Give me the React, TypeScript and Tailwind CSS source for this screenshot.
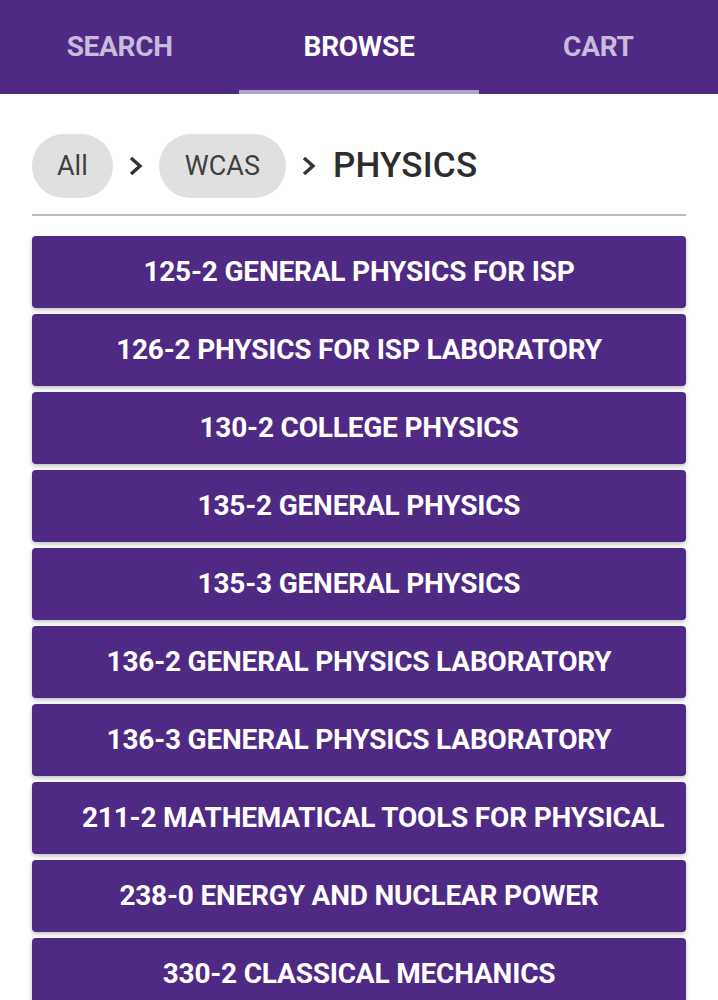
import React from "react"

const courses = [
  "125-2 GENERAL PHYSICS FOR ISP",
  "126-2 PHYSICS FOR ISP LABORATORY",
  "130-2 COLLEGE PHYSICS",
  "135-2 GENERAL PHYSICS",
  "135-3 GENERAL PHYSICS",
  "136-2 GENERAL PHYSICS LABORATORY",
  "136-3 GENERAL PHYSICS LABORATORY",
  "211-2 MATHEMATICAL TOOLS FOR PHYSICAL",
  "238-0 ENERGY AND NUCLEAR POWER",
  "330-2 CLASSICAL MECHANICS",
]

function Chevron() {
  return (
    <svg width="16" height="22" viewBox="0 0 16 22" className="mx-[15px] shrink-0 text-[#333]">
      <polyline points="3,3 12,11 3,19" fill="none" stroke="currentColor" strokeWidth="3.4" />
    </svg>
  )
}

export default function App() {
  return (
    <div className="min-h-screen bg-white font-['Roboto',sans-serif]">
      <header className="flex h-[94px] bg-[#4e2a84]">
        {["SEARCH", "BROWSE", "CART"].map((tab) => (
          <button
            key={tab}
            type="button"
            className={`relative flex flex-1 items-center justify-center pb-[1px] text-[28px] font-bold tracking-[-0.3px] ${
              tab === "BROWSE" ? "text-white" : "text-[#c6bbdc]"
            }`}
          >
            {tab}
            {tab === "BROWSE" && <span className="absolute bottom-0 left-0 h-[4px] w-full bg-[#b0a3cc]" />}
          </button>
        ))}
      </header>

      <main className="px-[32px] pt-[40px]">
        <nav className="flex items-center pb-[16px]">
          <span className="flex h-[64px] items-center rounded-full bg-[#e0e0e0] px-[25px] text-[27px] text-[#404040]">All</span>
          <Chevron />
          <span className="flex h-[64px] items-center rounded-full bg-[#e0e0e0] px-[26px] text-[27px] text-[#404040]">WCAS</span>
          <Chevron />
          <span className="ml-[1px] text-[35px] font-medium tracking-[0.2px] text-[#2d2d2d]">PHYSICS</span>
        </nav>
        <div className="h-[2px] bg-[#bdbdbd]" />

        <ul className="mt-[20px] flex flex-col gap-[6px]">
          {courses.map((c) => (
            <li key={c}>
              <button
                type="button"
                className="block h-[72px] w-full overflow-hidden whitespace-nowrap rounded-[4px] bg-[#4e2a84] px-[50px] text-center text-[28px] font-bold tracking-[-0.2px] text-white shadow-[0_2px_4px_rgba(0,0,0,0.25)]"
              >
                {c}
              </button>
            </li>
          ))}
        </ul>
      </main>
    </div>
  )
}
